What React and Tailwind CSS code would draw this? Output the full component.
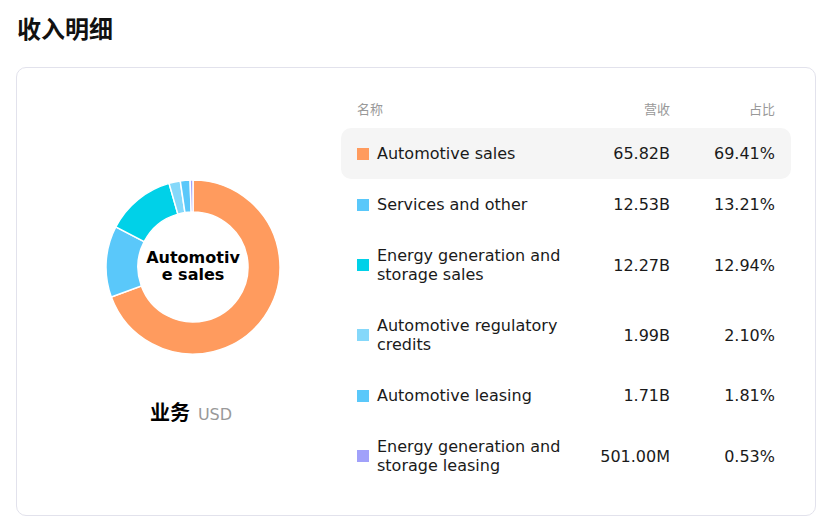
const rows = [
    { name: 'Automotive sales', revenue: '65.82B', pct: 69.41, color: '#FF9B5E', active: true },
    { name: 'Services and other', revenue: '12.53B', pct: 13.21, color: '#5AC8FA' },
    { name: 'Energy generation and storage sales', revenue: '12.27B', pct: 12.94, color: '#00D1E8' },
    { name: 'Automotive regulatory credits', revenue: '1.99B', pct: 2.1, color: '#85D8FA' },
    { name: 'Automotive leasing', revenue: '1.71B', pct: 1.81, color: '#5AC8FA' },
    { name: 'Energy generation and storage leasing', revenue: '501.00M', pct: 0.53, color: '#A1A1FA' },
];

const font = { fontFamily: '"DejaVu Sans", "Noto Sans CJK SC", sans-serif' };

function arc(cx, cy, r, r0, a0, a1) {
    const p = (rad, a) => [cx + rad * Math.sin(a), cy - rad * Math.cos(a)];
    const large = a1 - a0 > Math.PI ? 1 : 0;
    const [x1, y1] = p(r, a0);
    const [x2, y2] = p(r, a1);
    const [x3, y3] = p(r0, a1);
    const [x4, y4] = p(r0, a0);
    return `M${x1} ${y1} A${r} ${r} 0 ${large} 1 ${x2} ${y2} L${x3} ${y3} A${r0} ${r0} 0 ${large} 0 ${x4} ${y4} Z`;
}

function Donut() {
    const total = rows.reduce((s, r) => s + r.pct, 0);
    let acc = 0;
    return (
        <div className="relative h-[180px] w-[180px]">
            <svg width="180" height="180" viewBox="0 0 180 180">
                {rows.map((r) => {
                    const a0 = (acc / total) * Math.PI * 2;
                    acc += r.pct;
                    const a1 = (acc / total) * Math.PI * 2;
                    return <path key={r.name} d={arc(90, 90, 87, 55, a0, a1)} fill={r.color} stroke="#fff" strokeWidth="1.5" />;
                })}
            </svg>
            <div className="absolute inset-0 flex items-center justify-center">
                <div className="-mt-[3px] w-[100px] text-center text-[16px] font-bold leading-[17px] text-black break-all">
                    Automotive sales
                </div>
            </div>
        </div>
    );
}

export default function App() {
    return (
        <div className="min-h-screen bg-white px-4 pt-4" style={font}>
            <h1 className="pl-px text-[24px] font-bold leading-[28px] text-[#111]">收入明细</h1>

            <div className="mt-[23px] flex h-[449px] w-[800px] rounded-[10px] border border-[#e2e2ec] p-6">
                <div className="flex flex-1 flex-col items-center pt-[85px]">
                    <div className="ml-[4px]">
                        <Donut />
                    </div>
                    <div className="mt-[41px] flex items-baseline gap-2">
                        <span className="text-[20px] font-bold text-black">业务</span>
                        <span className="text-[16px] text-[#999]">USD</span>
                    </div>
                </div>

                <div className="w-[450px] shrink-0">
                    <div className="flex px-4 pt-[8px] pb-[9px] text-[13px] leading-[19px] text-[#999]">
                        <div className="flex-1">名称</div>
                        <div className="w-[100px] shrink-0 text-right">营收</div>
                        <div className="w-[105px] shrink-0 text-right">占比</div>
                    </div>
                    {rows.map((r) => (
                        <div key={r.name}
                            className={`flex items-center rounded-[10px] px-4 py-[16px] text-[16px] leading-[19px] text-[#1a1a1a] ${r.active ? 'bg-[#f5f5f5]' : ''}`}>
                            <div className="flex min-w-0 flex-1 items-center">
                                <span className="mr-2 h-3 w-3 shrink-0" style={{ backgroundColor: r.color }} />
                                <span className="w-[190px]">{r.name}</span>
                            </div>
                            <div className="w-[100px] shrink-0 text-right">{r.revenue}</div>
                            <div className="w-[105px] shrink-0 text-right">{r.pct.toFixed(2)}%</div>
                        </div>
                    ))}
                </div>
            </div>
        </div>
    );
}
